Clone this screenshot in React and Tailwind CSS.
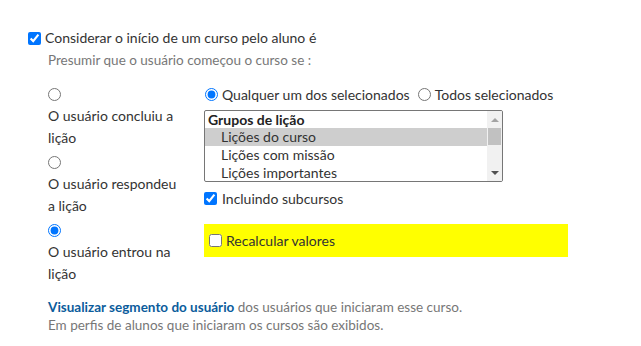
import React, { useState } from "react";

const font = { fontFamily: "Lato, 'Open Sans', sans-serif" };

const Radio = ({ checked, onChange }) => (
  <input
    type="radio"
    checked={checked}
    onChange={onChange}
    className="m-0 w-[13px] h-[13px] accent-[#0075ff]"
  />
);

const Check = ({ checked, onChange }) => (
  <input
    type="checkbox"
    checked={checked}
    onChange={onChange}
    className="m-0 w-[13px] h-[13px] accent-[#0075ff]"
  />
);

const LessonGroups = () => {
  const groups = ["Lições do curso", "Lições com missão", "Lições importantes"];
  const [selected, setSelected] = useState(0);

  return (
    <div className="flex w-[299px] h-[72px] border border-[#767676] rounded-[2px] overflow-hidden bg-white">
      <div className="flex-1">
        <div className="h-[17px] leading-[17px] pl-[3px] font-bold text-[#222]">
          Grupos de lição
        </div>
        {groups.map((g, i) => (
          <div
            key={g}
            onClick={() => setSelected(i)}
            className={
              selected === i
                ? "h-[18px] leading-[18px] pl-[16px] bg-[#cecece]"
                : "h-[18px] leading-[18px] pl-[16px]"
            }
          >
            {g}
          </div>
        ))}
      </div>
      {/* scrollbar */}
      <div className="w-[15px] bg-[#f1f1f1] flex flex-col items-center">
        <div className="h-[17px] flex items-center justify-center">
          <div className="w-0 h-0 border-l-[4px] border-r-[4px] border-b-[4px] border-l-transparent border-r-transparent border-b-[#a3a3a3]" />
        </div>
        <div className="w-[13px] h-[17px] bg-[#c1c1c1]" />
        <div className="flex-1" />
        <div className="h-[17px] flex items-center justify-center">
          <div className="w-0 h-0 border-l-[4px] border-r-[4px] border-t-[4px] border-l-transparent border-r-transparent border-t-[#505050]" />
        </div>
      </div>
    </div>
  );
};

export default function App() {
  const [consider, setConsider] = useState(true);
  const [trigger, setTrigger] = useState("entered");
  const [match, setMatch] = useState("any");
  const [subcourses, setSubcourses] = useState(true);
  const [recalc, setRecalc] = useState(false);

  const triggers = [
    { id: "completed", label: "O usuário concluiu a lição" },
    { id: "answered", label: "O usuário respondeu a lição" },
    { id: "entered", label: "O usuário entrou na lição" },
  ];

  return (
    <div className="w-[641px] h-[346px] bg-white text-[#333] pt-[29px] pl-[28px]" style={font}>
      {/* Main option */}
      <label className="flex items-center gap-[4px] text-[14px] leading-[18px]">
        <Check checked={consider} onChange={() => setConsider(!consider)} />
        <span>Considerar o início de um curso pelo aluno é</span>
      </label>

      <div className="pl-[20px]">
        <p className="mt-[5px] text-[13.5px] leading-[16px] text-[#777]">
          Presumir que o usuário começou o curso se :
        </p>

        <div className="flex mt-[15px]">
          {/* Trigger choices */}
          <div className="w-[156px] flex flex-col gap-[2px] text-[14px]">
            {triggers.map((t) => (
              <label key={t.id} className="block">
                <div className="h-[22px] flex items-center">
                  <Radio checked={trigger === t.id} onChange={() => setTrigger(t.id)} />
                </div>
                <div className="leading-[22px] w-[136px]">{t.label}</div>
              </label>
            ))}
          </div>

          {/* Lesson groups */}
          <div className="flex flex-col text-[14px]">
            <div className="h-[22px] flex items-center gap-[4px] pl-[1px]">
              <Radio checked={match === "any"} onChange={() => setMatch("any")} />
              <span className="mr-[4px]">Qualquer um dos selecionados</span>
              <Radio checked={match === "all"} onChange={() => setMatch("all")} />
              <span>Todos selecionados</span>
            </div>

            <div className="mt-[5px]">
              <LessonGroups />
            </div>

            <label className="h-[18px] mt-[7px] flex items-center gap-[5px]">
              <Check checked={subcourses} onChange={() => setSubcourses(!subcourses)} />
              <span>Incluindo subcursos</span>
            </label>

            <div className="mt-[17px] w-[364px] h-[33px] bg-[#ffff00] flex items-center gap-[4px] pl-[5px]">
              <Check checked={recalc} onChange={() => setRecalc(!recalc)} />
              <span>Recalcular valores</span>
            </div>
          </div>
        </div>

        <div className="mt-[13px] text-[13.5px] leading-[18px] text-[#777]">
          <p>
            <a href="#" className="font-bold text-[#0b5c9c]">
              Visualizar segmento do usuário
            </a>{" "}
            dos usuários que iniciaram esse curso.
          </p>
          <p>Em perfis de alunos que iniciaram os cursos são exibidos.</p>
        </div>
      </div>
    </div>
  );
}
